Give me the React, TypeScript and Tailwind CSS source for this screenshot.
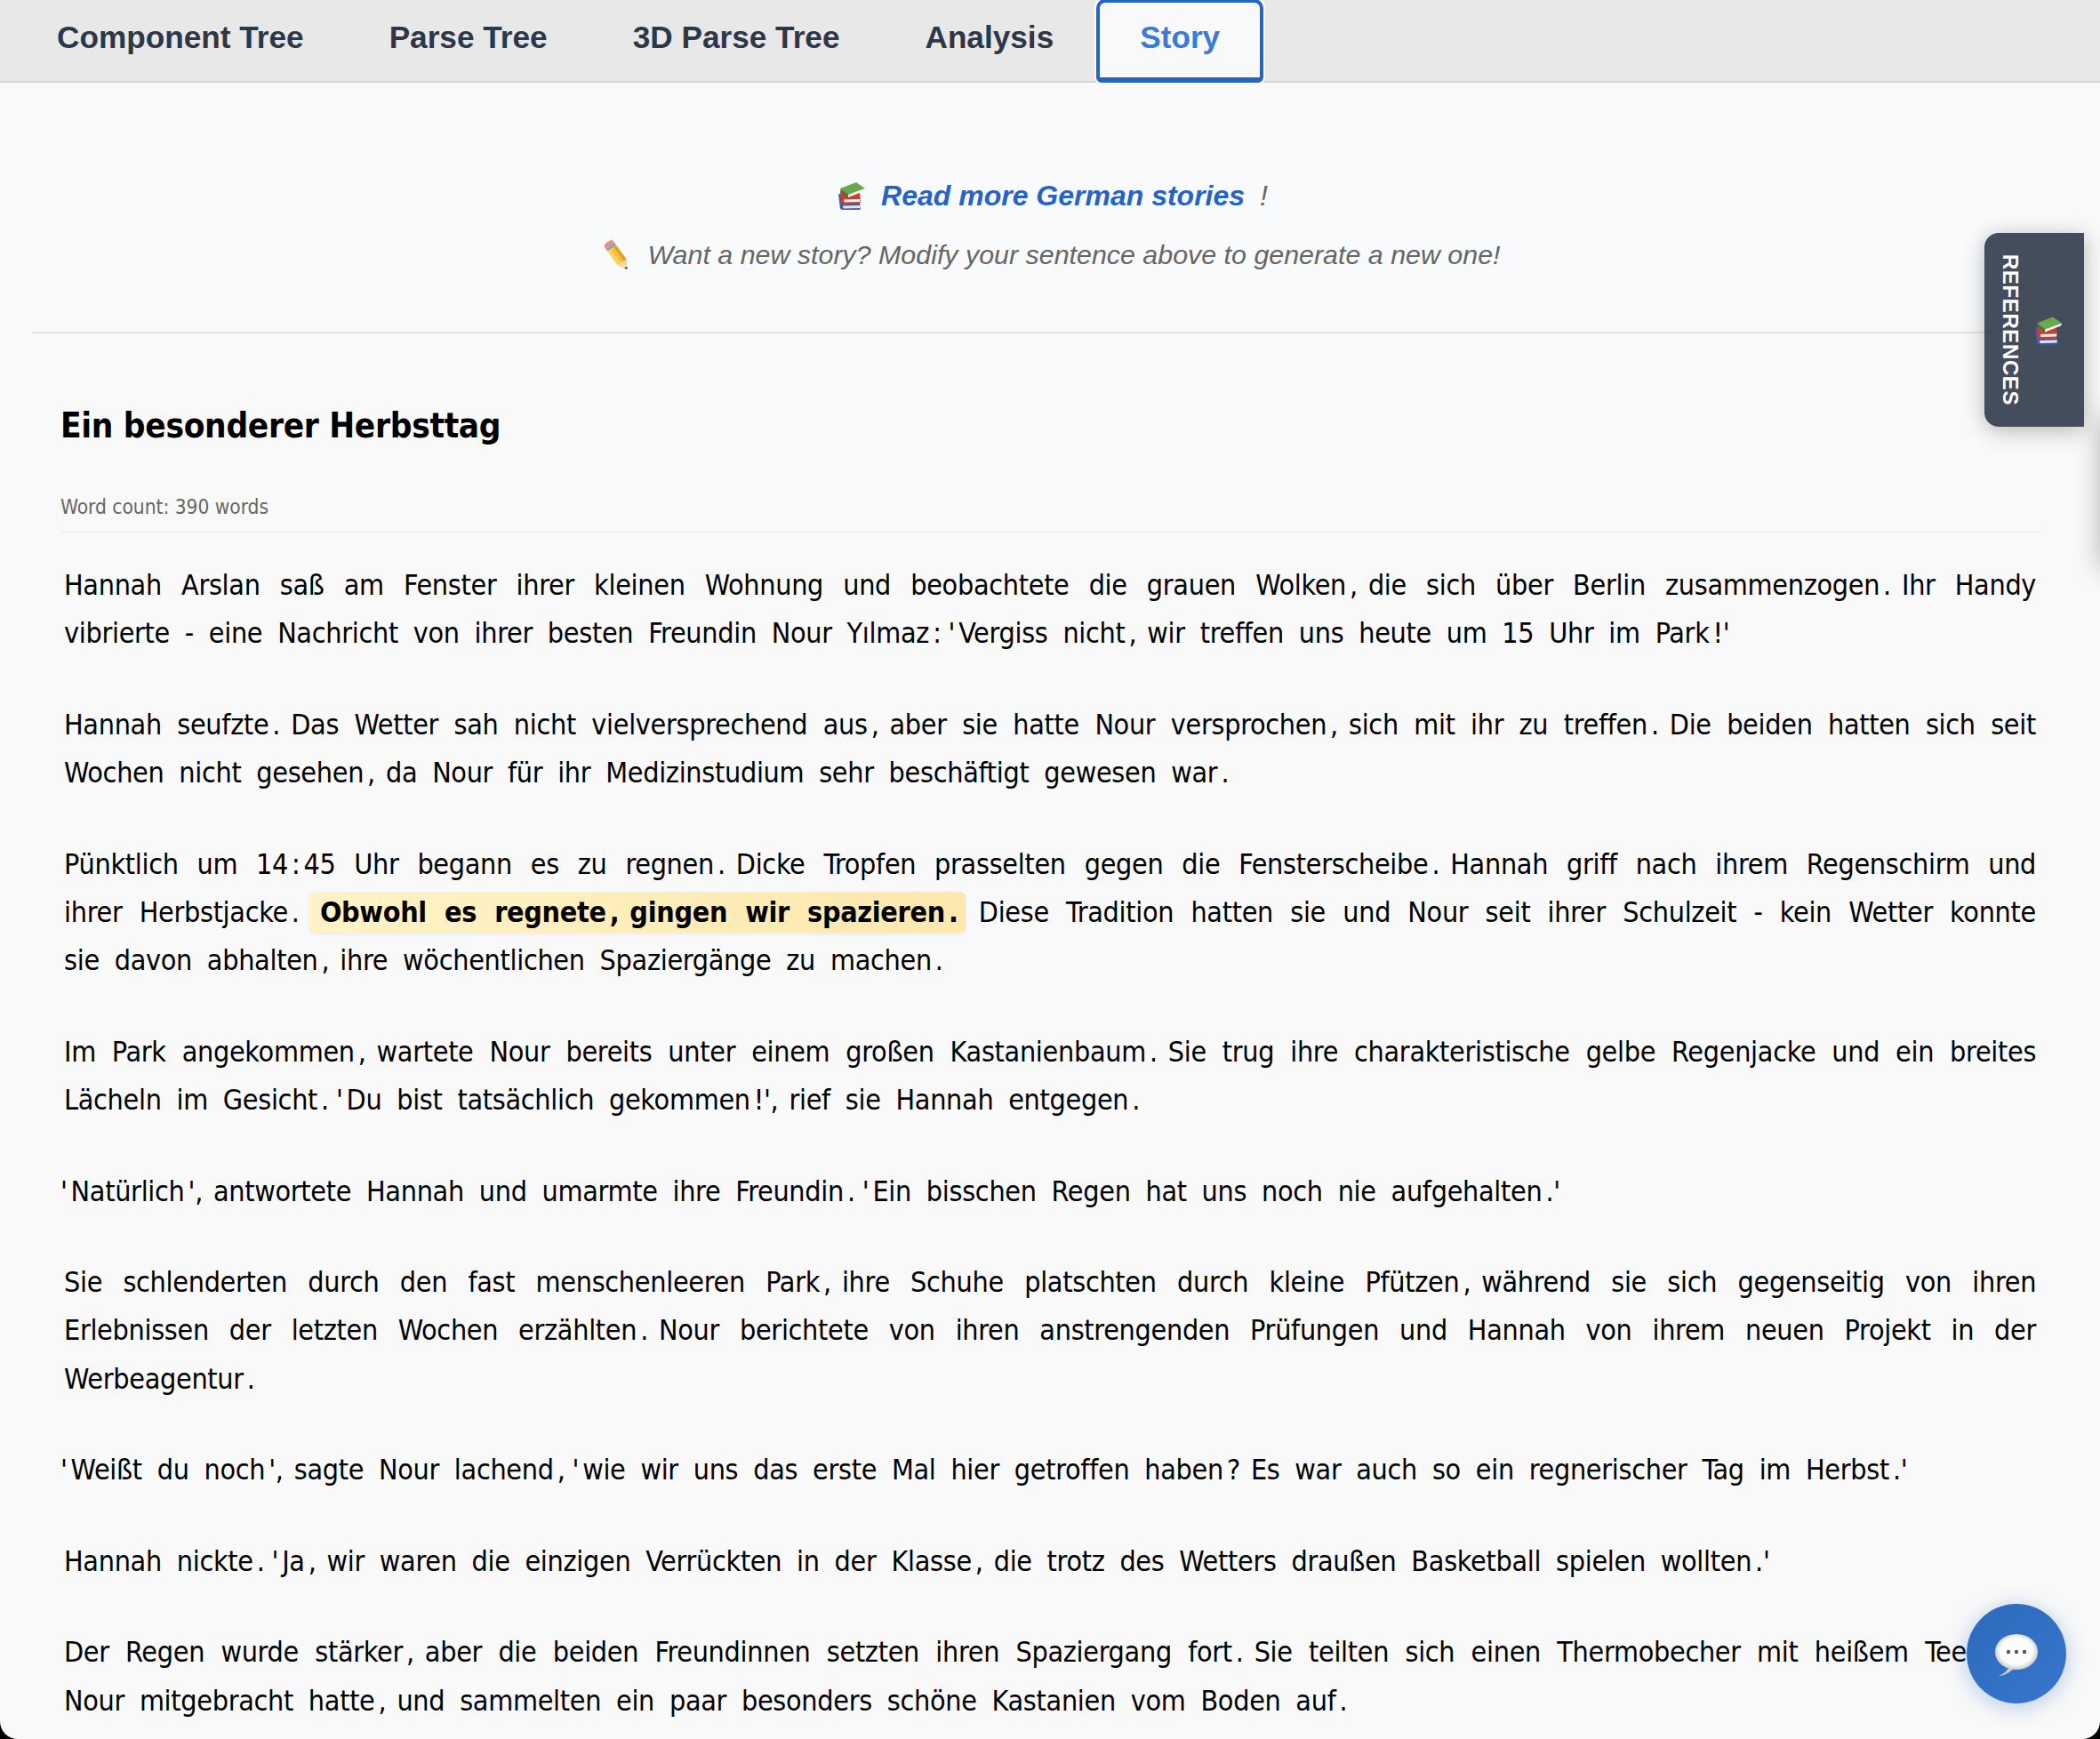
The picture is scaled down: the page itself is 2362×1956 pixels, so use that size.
import React from "react";

const body = "[font-family:'DejaVu_Sans_Condensed','DejaVu_Sans',sans-serif]";

function Books({ className }: { className?: string }) {
  return (
    <svg viewBox="0 0 32 32" className={className} aria-hidden="true">
      <path d="M1 14 L24 17 L26 30 L25 32 L6 32 L3 31 Z" fill="#3d5cb0" />
      <path d="M6 27.5 L26 27 L25.5 30 L6.5 30.5 Z" fill="#e6e6e6" />
      <path d="M3 11 L25 13 L26 22 L25 25 L6 26 L4 24 Z" fill="#c8402f" />
      <path d="M7 20.5 L25.5 20 L25 23 L7.5 23.5 Z" fill="#f0eeea" />
      <path d="M3 8 L21 1 L31 8 L12 15 Z" fill="#6aa84f" />
      <path d="M3 8 L12 15 L12 18 L4 12 Z" fill="#3f7a35" />
      <path d="M12 15 L31 8 L30 11 L12 18 Z" fill="#f2f2ee" />
    </svg>
  );
}

function Pencil({ className }: { className?: string }) {
  return (
    <svg viewBox="0 0 27 33" className={className} aria-hidden="true">
      <g transform="rotate(-36 13.5 16.5)">
        <path d="M7.5 1.5 Q7.5 -1 13.5 -1 Q19.5 -1 19.5 1.5 L19.5 4 L7.5 4 Z" fill="#e88f8a" />
        <rect x="7.5" y="4" width="12" height="3.5" fill="#8fa3b8" />
        <rect x="7.5" y="7.5" width="4" height="20" fill="#fbd45c" />
        <rect x="11.5" y="7.5" width="4" height="20" fill="#f6c137" />
        <rect x="15.5" y="7.5" width="4" height="20" fill="#e49f22" />
        <path d="M7.5 27.5 L19.5 27.5 L13.5 37 Z" fill="#f2d6aa" />
        <path d="M11.8 34 L15.2 34 L13.5 37 Z" fill="#2f2f2f" />
      </g>
    </svg>
  );
}

function Bubble({ className }: { className?: string }) {
  return (
    <svg viewBox="0 0 48 47" className={className} aria-hidden="true">
      <defs>
        <radialGradient id="bubbleFill" cx="50%" cy="48%" r="56%">
          <stop offset="0%" stopColor="#ffffff" />
          <stop offset="68%" stopColor="#fbfbfb" />
          <stop offset="100%" stopColor="#bdbdbd" />
        </radialGradient>
      </defs>
      <path d="M14 33 L15 38 Q12 44 4 47 Q12 47 21 39 Z" fill="#c9c9c9" />
      <ellipse cx="24" cy="20" rx="24" ry="20" fill="url(#bubbleFill)" />
      <circle cx="15" cy="20" r="2.2" fill="#555555" />
      <circle cx="24" cy="20" r="2.2" fill="#555555" />
      <circle cx="33" cy="20" r="2.2" fill="#555555" />
    </svg>
  );
}

function Rich({ text }: { text: string }) {
  const chunks = text.split(" ");
  const out: React.ReactNode[] = [];
  let prevEndedWord = false;
  chunks.forEach((chunk, ci) => {
    const parts = chunk.match(/[\p{L}\p{N}-]+|[^\p{L}\p{N}-]/gu) || [];
    parts.forEach((p, pi) => {
      const isWord = /[\p{L}\p{N}-]/u.test(p);
      if (pi === 0 && ci > 0 && prevEndedWord && isWord) out.push(" ");
      const lastOfChunk = pi === parts.length - 1 && ci < chunks.length - 1;
      out.push(
        isWord ? (
          <span key={ci + "-" + pi} className="mx-[4px]">
            {p}
          </span>
        ) : lastOfChunk ? (
          <span key={ci + "-" + pi} className="mr-[8px]">
            {p}
          </span>
        ) : (
          p
        )
      );
      prevEndedWord = isWord;
    });
  });
  return <>{out}</>;
}

const paragraphs: React.ReactNode[] = [
  <Rich text="Hannah Arslan saß am Fenster ihrer kleinen Wohnung und beobachtete die grauen Wolken, die sich über Berlin zusammenzogen. Ihr Handy vibrierte - eine Nachricht von ihrer besten Freundin Nour Yılmaz: 'Vergiss nicht, wir treffen uns heute um 15 Uhr im Park!'" />,
  <Rich text="Hannah seufzte. Das Wetter sah nicht vielversprechend aus, aber sie hatte Nour versprochen, sich mit ihr zu treffen. Die beiden hatten sich seit Wochen nicht gesehen, da Nour für ihr Medizinstudium sehr beschäftigt gewesen war." />,
  <>
    <Rich text="Pünktlich um 14:45 Uhr begann es zu regnen. Dicke Tropfen prasselten gegen die Fensterscheibe. Hannah griff nach ihrem Regenschirm und ihrer Herbstjacke." />{" "}
    <span className="rounded-[6px] bg-gradient-to-r from-[#fef3c7] to-[#fde8ae] px-[8px] py-[4px] font-bold shadow-[0_2px_4px_rgba(0,0,0,0.06)]">
      <Rich text="Obwohl es regnete, gingen wir spazieren." />
    </span>{" "}
    <Rich text="Diese Tradition hatten sie und Nour seit ihrer Schulzeit - kein Wetter konnte sie davon abhalten, ihre wöchentlichen Spaziergänge zu machen." />
  </>,
  <Rich text="Im Park angekommen, wartete Nour bereits unter einem großen Kastanienbaum. Sie trug ihre charakteristische gelbe Regenjacke und ein breites Lächeln im Gesicht. 'Du bist tatsächlich gekommen!', rief sie Hannah entgegen." />,
  <Rich text="'Natürlich', antwortete Hannah und umarmte ihre Freundin. 'Ein bisschen Regen hat uns noch nie aufgehalten.'" />,
  <Rich text="Sie schlenderten durch den fast menschenleeren Park, ihre Schuhe platschten durch kleine Pfützen, während sie sich gegenseitig von ihren Erlebnissen der letzten Wochen erzählten. Nour berichtete von ihren anstrengenden Prüfungen und Hannah von ihrem neuen Projekt in der Werbeagentur." />,
  <Rich text="'Weißt du noch', sagte Nour lachend, 'wie wir uns das erste Mal hier getroffen haben? Es war auch so ein regnerischer Tag im Herbst.'" />,
  <Rich text="Hannah nickte. 'Ja, wir waren die einzigen Verrückten in der Klasse, die trotz des Wetters draußen Basketball spielen wollten.'" />,
  <Rich text="Der Regen wurde stärker, aber die beiden Freundinnen setzten ihren Spaziergang fort. Sie teilten sich einen Thermobecher mit heißem Tee, den Nour mitgebracht hatte, und sammelten ein paar besonders schöne Kastanien vom Boden auf." />,
];

const tabs = ["Component Tree", "Parse Tree", "3D Parse Tree", "Analysis"];

export default function App() {
  return (
    <div className="h-[1956px] w-[2362px] overflow-hidden bg-black">
      <div className="relative h-full w-full overflow-hidden rounded-b-[20px] bg-[#f9f9f9] font-['Liberation_Sans',sans-serif]">
        <nav className="flex h-[93px] border-b-2 border-[#d4d4d4] bg-[#e8e8e8] pl-[16px]">
          {tabs.map((t) => (
            <div key={t} className="px-[48px] pt-[22px] text-[35.2px] leading-[40px] font-bold text-[#2d3748]">
              {t}
            </div>
          ))}
          <div className="-mt-[1px] h-[94px] rounded-t-[10px] rounded-b-[6px] border-[4px] border-b-[6px] border-[#2563c4] bg-[#f9f9f9] px-[45px] pt-[19px] text-[35.2px] leading-[40px] font-bold text-[#3a7bd5] shadow-[0_0_0_2px_#ffffff]">
            Story
          </div>
        </nav>

        <main>
          <section className="mx-[36px] mt-[40px] h-[242px] border-b-2 border-[#e3e3e3] bg-[#f8fafc] pt-[63px] text-[32px] leading-[48px] italic">
            <div className="flex items-center justify-center gap-[17px] pl-[6px]">
              <Books className="h-[32px] w-[32px]" />
              <a className="font-bold text-[#2563c4]">Read more German stories</a>
              <span className="text-[#666666]">!</span>
            </div>
            <div className="mt-[18px] flex items-center justify-center gap-[21px] pl-[6px] text-[30.4px] text-[#666666]">
              <Pencil className="h-[33px] w-[27px]" />
              <span>Want a new story? Modify your sentence above to generate a new one!</span>
            </div>
          </section>

          <article className={"mx-[68px] pt-[80px] text-black " + body}>
            <h1 className="text-[38.4px] leading-[48px] font-bold tracking-[-0.3px]">Ein besonderer Herbsttag</h1>
            <div className="mt-[51px] border-b-2 border-[#f0f0f0] pb-[11px] text-[22.5px] leading-[32px] text-[#666666]">
              Word count: 390 words
            </div>
            <div className="mt-[32px] text-[32px] leading-[54.4px] tracking-[-0.3px]">
              {paragraphs.map((p, i) => (
                <p key={i} className="mb-[48px] text-justify">
                  {p}
                </p>
              ))}
            </div>
          </article>
        </main>

        <div className="absolute top-[470px] left-[2362px] h-[170px] w-[100px] shadow-[0_0_28px_rgba(0,0,0,0.28)]" />

        <aside className="absolute top-[262px] left-[2232px] flex h-[218px] w-[112px] items-center gap-[15px] rounded-l-[16px] bg-[rgba(45,55,72,0.89)] pl-[17px] shadow-[0_4px_24px_rgba(0,0,0,0.28)]">
          <span className="text-[24px] leading-[24px] font-bold tracking-[0.6px] text-white [writing-mode:vertical-rl]">
            REFERENCES
          </span>
          <Books className="h-[33px] w-[32px]" />
        </aside>

        <button className="absolute top-[1804px] left-[2212px] flex h-[112px] w-[112px] items-center justify-center rounded-full bg-gradient-to-br from-[#2d6abc] to-[#3776cd] pt-[2px] shadow-[0_4px_24px_rgba(48,111,196,0.35)]">
          <Bubble className="h-[47px] w-[48px]" />
        </button>
      </div>
    </div>
  );
}
